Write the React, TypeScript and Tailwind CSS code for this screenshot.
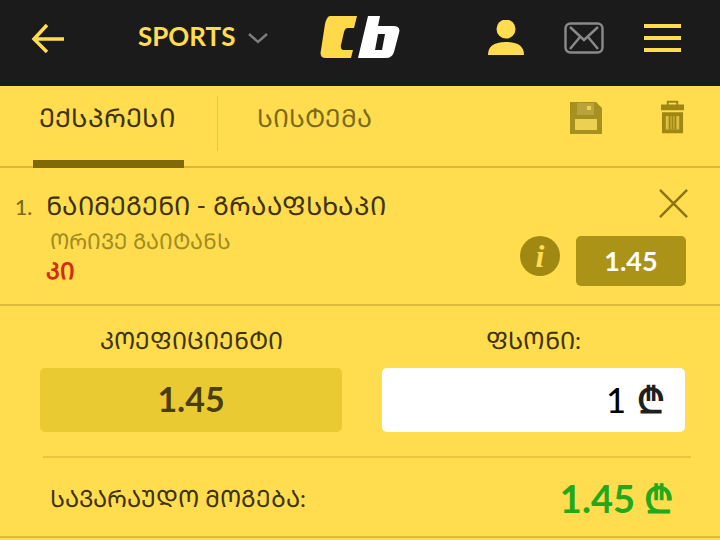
function Header() {
  return (
    <header className="flex h-[86px] items-center bg-[#1b1b1b] pb-[11px]">
      <div className="ml-[31px] w-[34px]">
        <svg viewBox="0 0 34 32" className="h-[32px] w-[34px]" fill="none" stroke="#ffdd4f" strokeWidth="3.5">
          <path d="M33 17H4M16 3 3 17l13 13" />
        </svg>
      </div>
      <span className="ml-[73px] -translate-y-[2px] text-[26px] leading-none font-bold text-[#ffdd4f]">SPORTS</span>
      <svg viewBox="0 0 22 12" className="ml-[12px] h-[12px] w-[22px]" fill="none" stroke="#7d7d7d" strokeWidth="2.4">
        <path d="m2 2 9 8 9-8" />
      </svg>
      <svg viewBox="0 0 80 44" className="ml-[51px] h-[44px] w-[80px]">
        <path fill="#ffd94a" d="M10 0h27l-3 12h-6q-3 0-4 4l-3 13q-1 4 2 5h10l-2 8H6q-7 0-5-8L5 8q2-8 5-8Z" />
        <path fill="#fff" fillRule="evenodd" d="M48 0h12l-2 10h15q8 0 6 7l-5 19q-2 6-8 6H38Zm10 18-3 16h7l3-16Z" />
      </svg>
      <svg viewBox="0 0 36 36" className="ml-[88px] h-[36px] w-[36px]" fill="#ffdd4f">
        <circle cx="18" cy="9" r="9.5" />
        <path d="M0 35c0-8 5-13 18-13s18 5 18 13Z" />
      </svg>
      <svg viewBox="0 0 40 32" className="ml-[40px] h-[32px] w-[40px]" fill="none" stroke="#8a8a8a" strokeWidth="2.4">
        <rect x="1.5" y="1.5" width="37" height="29" rx="5" />
        <path d="m6 5 14 13L34 5M6 27l10-12M34 27 24 15" />
      </svg>
      <div className="ml-[40px] flex w-[37px] flex-col gap-[8px]">
        <div className="h-[4px] bg-[#ffdd4f]" />
        <div className="h-[4px] bg-[#ffdd4f]" />
        <div className="h-[4px] bg-[#ffdd4f]" />
      </div>
    </header>
  );
}

function Tabs() {
  return (
    <div className="flex h-[82px] items-start border-b-2 border-[#d9b93a]">
      <div className="relative ml-[32px] h-[80px] w-[151px] pt-[15px] text-center">
        <span className="text-[26px] leading-[32px] text-[#3d3208]">ᲔᲥᲡᲞᲠᲔᲡᲘ</span>
        <div className="absolute right-[-1px] -bottom-[2px] left-[1px] h-[8px] bg-[#806908]" />
      </div>
      <div className="mt-[10px] ml-[34px] h-[55px] w-px bg-[#e6c545]" />
      <span className="mt-[15px] ml-[39px] text-[25px] leading-[32px] text-[#7a6a1a]">ᲡᲘᲡᲢᲔᲛᲐ</span>
      <div className="mt-[14px] mr-[36px] ml-auto flex items-end gap-[59px]">
        <svg viewBox="0 0 32 32" className="h-[32px] w-[32px]">
          <path fill="#a69020" d="M0 0h26l6 6v26H0Z" />
          <path fill="#b9a33a" d="M7 1h17v12H7Z" />
          <path fill="#ecd052" d="M17 4h4v4h-4ZM5 17h22v11H5Z" />
        </svg>
        <svg viewBox="0 0 24 34" className="h-[34px] w-[23px]">
          <path fill="#a08712" fillRule="evenodd" d="M6 0h12v4h6v6H0V4h6Zm2 2v2h8V2ZM1 12h22v22H1Z" />
          <path fill="#dcbf42" d="M5 16h14v14H5Z" />
          <path fill="#a08712" d="M8 16h2v14H8Zm3 0h2v14h-2Zm3 0h2v14h-2Z" />
        </svg>
      </div>
    </div>
  );
}

function Selection() {
  return (
    <section className="relative h-[138px] border-b-2 border-[#dcbc3c] pt-[20px] pl-[15px]">
      <div className="flex items-baseline">
        <span className="w-[31px] text-[21px] font-medium text-[#7a6a1a]">1.</span>
        <span className="text-[25.75px] leading-[34px] text-[#3d3208]">ᲜᲐᲘᲛᲔᲒᲔᲜᲘ - ᲒᲠᲐᲐᲤᲡᲮᲐᲞᲘ</span>
      </div>
      <p className="mt-[3px] ml-[35px] text-[21.6px] leading-[31px] text-[#a08c22]">ᲝᲠᲘᲕᲔ ᲒᲐᲘᲢᲐᲜᲡ</p>
      <p className="-mt-[1px] ml-[31px] text-[23px] leading-[28px] font-bold text-[#d62a10]">ᲙᲘ</p>
      <svg viewBox="0 0 32 32" className="absolute top-[20px] right-[31px] h-[31px] w-[31px]" fill="none" stroke="#8a7412" strokeWidth="2.5">
        <path d="m2 2 28 28M30 2 2 30" />
      </svg>
      <div className="absolute top-[68px] right-[160px] flex h-[40px] w-[40px] items-center justify-center rounded-full bg-[#a08812] font-['Liberation_Serif',serif] text-[32px] font-bold italic text-[#ffdd4f]">
        i
      </div>
      <div className="absolute top-[68px] right-[34px] flex h-[50px] w-[110px] items-center justify-center rounded-[5px] bg-[#ab9318] text-[27px] font-bold text-white">
        1.45
      </div>
    </section>
  );
}

function Stake() {
  return (
    <section className="h-[232px] border-b-2 border-[#dcbc3c]">
      <div className="flex pt-[16px] pl-[40px]">
        <div className="w-[302px]">
          <p className="text-center text-[23.7px] leading-[36px] text-[#3d3208]">ᲙᲝᲔᲤᲘᲪᲘᲔᲜᲢᲘ</p>
          <div className="mt-[10px] flex h-[64px] items-center justify-center rounded-[5px] bg-[#e9ca33] pb-[3px] text-[34px] font-bold text-[#4a3d0c]">
            1.45
          </div>
        </div>
        <div className="ml-[40px] w-[303px]">
          <p className="text-center text-[24px] leading-[36px] text-[#3d3208]">ᲤᲡᲝᲜᲘ:</p>
          <div className="mt-[10px] flex h-[64px] items-center justify-end gap-[11px] rounded-[5px] bg-white pr-[20px] pb-[2px] text-[34px] font-medium text-black">
            1
            <span className="text-[36px] leading-none font-bold text-[#1f1f1f]">₾</span>
          </div>
        </div>
      </div>
      <div className="mt-[24px] mr-[29px] ml-[43px] h-[2px] bg-[#e6c73e]" />
      <div className="flex items-center justify-between pt-[21px] pr-[47px] pl-[50px]">
        <span className="text-[23.7px] leading-[36px] text-[#3d3208]">ᲡᲐᲕᲐᲠᲐᲣᲓᲝ ᲛᲝᲒᲔᲑᲐ:</span>
        <span className="flex items-center gap-[9px] text-[38px] leading-none font-bold text-[#22a81c]">
          1.45
          <span className="text-[38px]">₾</span>
        </span>
      </div>
    </section>
  );
}

export default function App() {
  return (
    <div className="h-[540px] w-[720px] overflow-hidden bg-[#ffdd4f] font-['Lato',sans-serif]">
      <Header />
      <Tabs />
      <Selection />
      <Stake />
    </div>
  );
}
